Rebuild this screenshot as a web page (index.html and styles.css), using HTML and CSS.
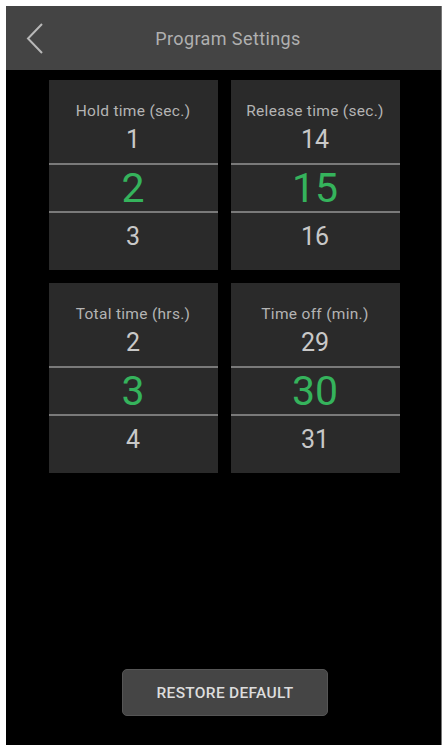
FILE: index.html
```html
<!DOCTYPE html>
<html lang="en">
<head>
    <meta charset="UTF-8">
    <meta name="viewport" content="width=device-width, initial-scale=1.0">
    <title>Program Settings</title>
    <link rel="stylesheet" href="styles.css">
</head>
<body>
<div class="screen">
    <div class="header">
        <span class="back">
            <svg width="18" height="32" viewBox="0 0 18 32">
                <polyline points="16,1 2,15.5 16,30" fill="none" stroke="#b8b8b8" stroke-width="2"/>
            </svg>
        </span>
        <h1>Program Settings</h1>
        <span></span>
    </div>

    <div class="pickers">
        <div class="picker">
            <div class="picker-top">
                <div class="picker-label">Hold time (sec.)</div>
                <div class="picker-value">1</div>
            </div>
            <div class="picker-sel">2</div>
            <div class="picker-bottom">3</div>
        </div>
        <div class="picker">
            <div class="picker-top">
                <div class="picker-label">Release time (sec.)</div>
                <div class="picker-value">14</div>
            </div>
            <div class="picker-sel">15</div>
            <div class="picker-bottom">16</div>
        </div>
        <div class="picker">
            <div class="picker-top">
                <div class="picker-label">Total time (hrs.)</div>
                <div class="picker-value">2</div>
            </div>
            <div class="picker-sel">3</div>
            <div class="picker-bottom">4</div>
        </div>
        <div class="picker">
            <div class="picker-top">
                <div class="picker-label">Time off (min.)</div>
                <div class="picker-value">29</div>
            </div>
            <div class="picker-sel">30</div>
            <div class="picker-bottom">31</div>
        </div>
    </div>

    <div class="footer">
        <button class="restore-btn">RESTORE DEFAULT</button>
    </div>
</div>
</body>
</html>
```

FILE: styles.css
```css
body {
    margin: 0;
    background-color: #ffffff;
    font-family: Roboto, "Liberation Sans", sans-serif;
}
.screen {
    margin: 6px 0 0 6px;
    width: 435px;
    height: 739px;
    background-color: #000000;
    border-right: 1px solid #777;
    display: flex;
    flex-direction: column;
}

/* barre du haut */
.header {
    height: 64px;
    background-color: #444444;
    display: grid;
    grid-template-columns: 1fr auto 1fr;
    align-items: center;
    padding-left: 9px;
}
.back {
    display: flex;
    padding-left: 11px;
    padding-top: 1px;
}
.header h1 {
    margin: 0;
    font-size: 18px;
    font-weight: 400;
    letter-spacing: 0.4px;
    color: #b0b0b0;
}

/* les 4 selecteurs */
.pickers {
    display: grid;
    grid-template-columns: 169px 169px;
    justify-content: center;
    column-gap: 13px;
    row-gap: 13px;
    padding-top: 10px;
    padding-left: 1px;
}
.picker {
    background-color: #2a2a2a;
    height: 190px;
    display: flex;
    flex-direction: column;
    text-align: center;
    color: #c8c8c8;
}
.picker-top {
    height: 83px;
    padding-top: 21px;
    box-sizing: border-box;
}
.picker-label {
    font-size: 15.5px;
    line-height: 20px;
    letter-spacing: 0.3px;
    color: #b4b4b4;
    white-space: nowrap;
}
.picker-value {
    margin-top: 5px;
    font-size: 25px;
    line-height: 28px;
}
.picker-sel {
    height: 46px;
    border-top: 2px solid #7a7a7a;
    border-bottom: 2px solid #7a7a7a;
    font-size: 41px;
    line-height: 46px;
    color: #35b35c;
}
.picker-bottom {
    padding-top: 10px;
    font-size: 25px;
    line-height: 28px;
}

/* bouton du bas */
.footer {
    margin-top: auto;
    padding-bottom: 29px;
    display: flex;
    justify-content: center;
    padding-left: 3px;
}
.restore-btn {
    width: 206px;
    height: 47px;
    background-color: #454545;
    border: 1px solid #555;
    border-radius: 5px;
    color: #dddddd;
    font-family: Roboto, "Liberation Sans", sans-serif;
    font-size: 15.5px;
    font-weight: 500;
    letter-spacing: 0.3px;
    cursor: pointer;
}
```
